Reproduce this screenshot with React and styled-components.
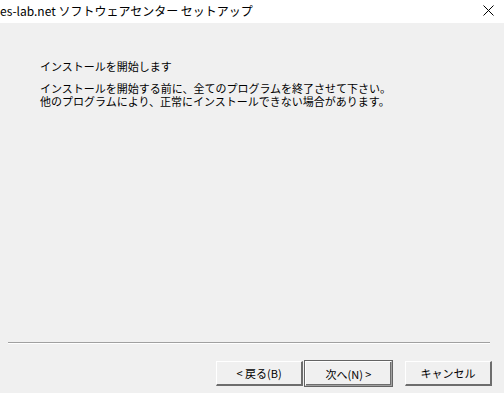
import React from "react";
import styled, { createGlobalStyle } from "styled-components";

const Global = createGlobalStyle`
  html, body { margin: 0; padding: 0; background: #f0f0f0; }
  body { font-family: "Noto Sans CJK JP", "Noto Sans", sans-serif; }
`;

const Window = styled.div`
  width: 504px;
  height: 393px;
  display: flex;
  flex-direction: column;
  background: #f0f0f0;
  overflow: hidden;
  color: #000;
`;

const TitleBar = styled.div`
  height: 23px;
  background: #ffffff;
  display: flex;
  align-items: center;
  justify-content: space-between;
  padding-right: 10px;
  box-sizing: border-box;
`;

const Title = styled.span`
  font-size: 12px;
  line-height: 1;
  margin-top: -2px;
  white-space: nowrap;
`;

const Close = styled.svg`
  width: 11px;
  height: 11px;
  margin-top: -3px;
`;

const Content = styled.div`
  flex: 1;
  padding: 37px 0 0 40px;
  display: flex;
  flex-direction: column;
  gap: 9px;
  font-size: 11px;
`;

const Heading = styled.div`
  line-height: 13px;
`;

const Body = styled.div`
  line-height: 13px;
`;

const Separator = styled.div`
  margin: 0 14px 0 8px;
  height: 1px;
  background: #a0a0a0;
  border-bottom: 1px solid #ffffff;
`;

const Footer = styled.div`
  height: 49px;
  display: flex;
  align-items: flex-start;
  justify-content: flex-end;
  padding: 17px 12px 0 0;
  box-sizing: border-box;
`;

const Button = styled.button`
  width: 87px;
  height: 25px;
  margin-left: ${(p) => p.$gap || 0}px;
  background: #f0f0f0;
  font-family: inherit;
  font-size: 11px;
  color: #000;
  padding: 0;
  box-sizing: border-box;
  border-style: solid;
  border-width: 1px 2px 2px 1px;
  border-color: #ffffff #6d6d6d #6d6d6d #ffffff;
  outline: ${(p) => (p.$default ? "1px solid #646464" : "none")};
  outline-offset: 0;
  ${(p) =>
    p.$default &&
    `
    border-width: 1px 1px 1px 1px;
    border-color: #ffffff #a0a0a0 #a0a0a0 #ffffff;
    box-shadow: inset -1px -1px 0 #6d6d6d;
  `}
`;

export default function App() {
  return (
    <>
      <Global />
      <Window>
        <TitleBar>
          <Title>es-lab.net ソフトウェアセンター セットアップ</Title>
          <Close viewBox="0 0 11 11">
            <path d="M0.5 0.5 L10.5 10.5 M10.5 0.5 L0.5 10.5" stroke="#000" strokeWidth="1" />
          </Close>
        </TitleBar>
        <Content>
          <Heading>インストールを開始します</Heading>
          <Body>
            インストールを開始する前に、全てのプログラムを終了させて下さい。
            <br />
            他のプログラムにより、正常にインストールできない場合があります。
          </Body>
        </Content>
        <Separator />
        <Footer>
          <Button>&lt; 戻る(B)</Button>
          <Button $default $gap={2}>次へ(N) &gt;</Button>
          <Button $gap={13}>キャンセル</Button>
        </Footer>
      </Window>
    </>
  );
}
